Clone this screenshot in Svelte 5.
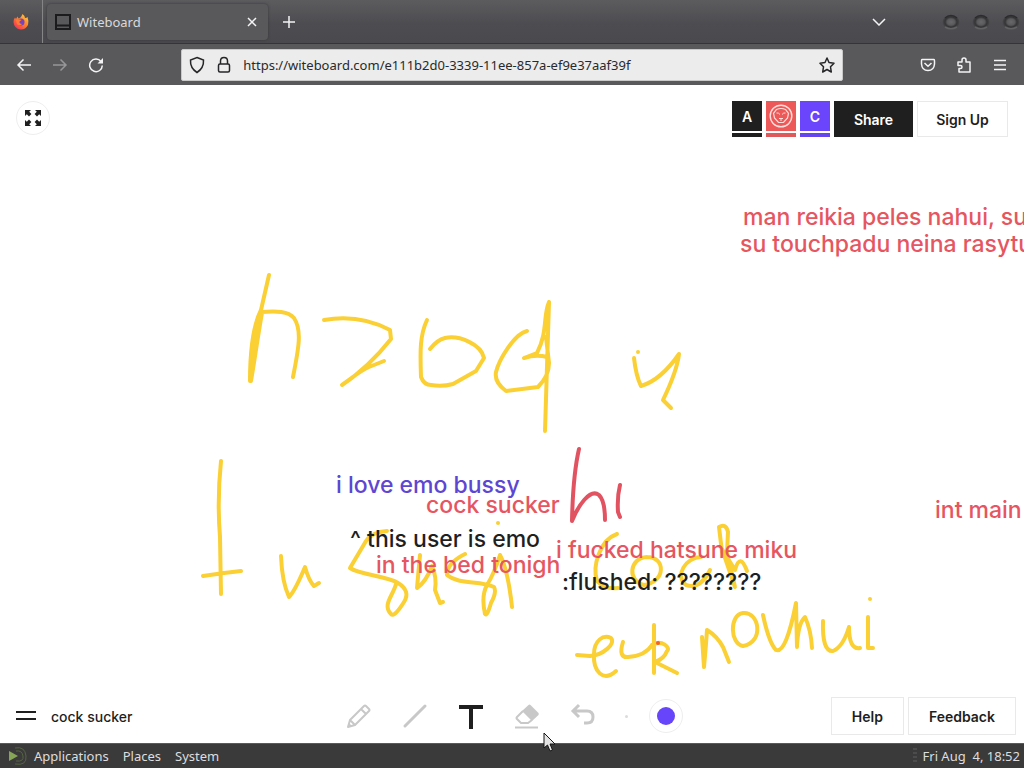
<script>
  let address = $state('https://witeboard.com/e111b2d0-3339-11ee-857a-ef9e37aaf39f');
  let boardName = $state('cock sucker');
  let tool = $state('text');

  const yellowStrokes = [
    'M269 275L261 310C253 326 250 352 250 381M262 313C258 335 255 358 251 381M260 314C254 332 253 355 250 376M261 312C277 311 288 311 294 318C302 330 299 347 293 377',
    'M324 320C347 316 369 319 390 330L391 339C376 358 360 373 342 385C351 379 361 370 369 367L384 361',
    'M427 320C420 335 420 350 421 377Q424 385 431 385Q442 387 453 384L476 371L484 358C481 344 459 335 445 338Q437 340 430 349',
    'M527 331C514 334 499 360 496 372Q494 382 506 391L538 387Q549 376 549 363L546 337M549 302C543 315 548 332 537 353L524 358Q536 354 547 357M549 302L545 431',
    'M638 352L638 352M634 358Q636 376 641 386Q661 380 679 354Q677 371 663 400L671 408',
    'M221 461Q217 500 220 537L221 594M203 576Q222 573 241 571',
    'M281 556Q282 582 289 597C295 591 300 579 305 567Q309 581 314 586L319 583',
    'M387 531Q372 532 366 541L350 568C360 575 387 576 398 583Q411 591 404 602Q394 618 391 614C382 605 393 596 396 584',
    'M420 555L417 588Q426 582 432 566Q437 577 435 590L440 603L443 602',
    'M465 554Q447 563 447 575C459 585 480 580 494 587Q497 592 491 603Q487 617 485 614Q481 596 487 585Q494 574 500 555Q508 570 512 607',
    'M498 523L498 523',
    'M617 534C600 540 592 566 597 581Q605 590 618 588',
    'M647 557C629 558 627 581 644 585C666 582 666 557 647 557',
    'M701 557C686 557 674 576 686 585Q700 590 710 570',
    'M722 552L719 527Q726 523 728 532L727 553L735 587L722 549L735 570Q740 552 747 571',
    'M577 655L590 656C603 655 616 644 611 638C603 634 594 641 594 654C593 671 603 683 616 671',
    'M623 642Q618 658 628 657Q645 656 652 645',
    'M654 625L654 673M652 645C662 639 671 648 667 651Q664 659 655 662L677 673',
    'M702 637L704 667Q706 645 707 630Q717 636 723 647L729 662',
    'M743 613C729 615 730 644 743 646C765 642 759 611 743 613',
    'M763 615Q769 643 776 650Q786 654 796 603L797 647Q798 623 805 617Q811 630 812 648',
    'M823 621Q822 652 833 651Q843 647 849 627Q849 650 860 648',
    'M868 617L868 648L873 648M870 599L870 599'
  ];

  const redStrokes = [
    'M579 449Q573 475 572 521C578 506 590 488 599 495Q605 501 605 520',
    'M620 485Q617 497 618 512L620 517'
  ];

  const notes = [
    { text: 'man reikia peles nahui, su', x: 743, y: 225, tone: 'red' },
    { text: 'su touchpadu neina rasytu', x: 740, y: 252, tone: 'red' },
    { text: 'i love emo bussy', x: 336, y: 493, tone: 'violet' },
    { text: 'cock sucker', x: 426, y: 513, tone: 'red' },
    { text: '^ this user is emo', x: 350, y: 547, tone: 'black' },
    { text: 'in the bed tonigh', x: 376, y: 573, tone: 'red' },
    { text: 'i fucked hatsune miku', x: 556, y: 558, tone: 'red' },
    { text: ':flushed: ????????', x: 562, y: 590, tone: 'black' },
    { text: 'int main', x: 935, y: 518, tone: 'red' }
  ];
</script>

<div class="desktop">
  <header class="tabs">
    <div class="pinned">
      <svg width="18" height="18" viewBox="0 0 18 18" aria-hidden="true">
        <defs>
          <linearGradient id="flame" x1="1" y1="0" x2="0.2" y2="1">
            <stop offset="0" stop-color="#ffe14a" />
            <stop offset="0.45" stop-color="#ff8a2a" />
            <stop offset="1" stop-color="#f0305c" />
          </linearGradient>
        </defs>
        <path d="M10.500 1Q13 3 13 5Q15 5 15.500 4Q17 8 16 12Q13 17 8.500 16.500Q2 15.500 1.500 9Q1.500 6 3 4.500L4 6L5.500 3.500L6.500 5.500Q9 5 10.500 1Z" fill="url(#flame)" />
        <circle cx="9" cy="9" r="3.500" fill="#7645bd" />
        <path d="M4 7Q7 5.500 9.500 7L7.500 8.500Q7 10.500 10 11Q8 13.500 5 11Z" fill="#ff7b35" />
      </svg>
    </div>
    <div class="tab">
      <svg width="16" height="16" viewBox="0 0 16 16" aria-hidden="true">
        <path d="M1 1H15V15H1ZM1 11.500H15" fill="none" stroke="#1b1b1d" stroke-width="2" />
      </svg>
      <span>Witeboard</span>
      <button aria-label="Close tab">
        <svg width="10" height="10" viewBox="0 0 10 10"><path d="M1 1L9 9M9 1L1 9" /></svg>
      </button>
    </div>
    <button class="new-tab" aria-label="New tab">
      <svg width="12" height="12" viewBox="0 0 12 12"><path d="M6 0V12M0 6H12" /></svg>
    </button>
    <button class="all-tabs" aria-label="List all tabs">
      <svg width="14" height="8" viewBox="0 0 14 8"><path d="M1 1L7 7L13 1" /></svg>
    </button>
    <div class="window-buttons">
      {#each ['Minimize', 'Maximize', 'Close'] as label}
        <button aria-label={label}>
          <svg width="18" height="16" viewBox="0 0 18 16">
            <defs>
              <radialGradient id={`ring-${label}`}>
                <stop offset="0" stop-color="#68686b" />
                <stop offset="0.45" stop-color="#5a5a5d" />
                <stop offset="0.7" stop-color="#343436" />
                <stop offset="1" stop-color="#48484b" />
              </radialGradient>
            </defs>
            <ellipse cx="9" cy="8" rx="8.500" ry="7" fill={`url(#ring-${label})`} stroke="none" />
            <path d="M3 4Q9 -1 15 4" stroke="#2c2c2e" />
            <path d="M3 13Q9 16.500 15 13" stroke="#626265" />
          </svg>
        </button>
      {/each}
    </div>
  </header>

  <nav class="toolbar" aria-label="Navigation">
    <div class="nav-group">
      <button aria-label="Back">
        <svg width="16" height="14" viewBox="0 0 16 14"><path d="M15 7H2M7.500 1.500L2 7L7.500 12.500" /></svg>
      </button>
      <button aria-label="Forward" class="faded">
        <svg width="16" height="14" viewBox="0 0 16 14"><path d="M1 7H14M8.500 1.500L14 7L8.500 12.500" /></svg>
      </button>
      <button aria-label="Reload">
        <svg width="16" height="16" viewBox="0 0 16 16"><path d="M13 4.500A6.300 6.300 0 1 0 14.300 8.500" /><path class="solid" d="M15 1V6.500H9.500Z" /></svg>
      </button>
    </div>
    <div class="spacer"></div>
    <label class="address">
      <svg width="16" height="18" viewBox="0 0 16 18"><path d="M8 1.500L14.500 4Q15 12 8 16.500Q1 12 1.500 4Z" /></svg>
      <svg width="14" height="18" viewBox="0 0 14 18"><rect x="1.500" y="8" width="11" height="8" rx="1.500" /><path d="M3.500 8V5Q3.500 1.500 7 1.500T10.500 5V8" /></svg>
      <input type="text" aria-label="Address" bind:value={address} />
      <svg width="16" height="16" viewBox="0 0 16 16"><path d="M8 1L10 5.500L15 6.200L11.500 9.800L12.300 15L8 12.500L3.700 15L4.500 9.800L1 6.200L6 5.500Z" stroke-linejoin="round" /></svg>
    </label>
    <div class="spacer"></div>
    <div class="nav-group">
      <button aria-label="Save to Pocket">
        <svg width="16" height="14" viewBox="0 0 16 14"><path d="M2 1.500H14Q14.500 1.500 14.500 3V6Q14 12.500 8 12.500T1.500 6V3Q1.500 1.500 2 1.500ZM4.500 5L8 8.300L11.500 5" /></svg>
      </button>
      <button aria-label="Extensions">
        <svg width="14" height="16" viewBox="0 0 14 16"><path d="M5 5V3Q5 1 7 1T9 3V5H13V15H2V11.500H3.500Q5 11.500 5 10T3.500 8.500H1V5Z" stroke-linejoin="round" /></svg>
      </button>
      <button aria-label="Menu">
        <svg width="12" height="12" viewBox="0 0 12 12"><path d="M0 1.500H12M0 6H12M0 10.500H12" /></svg>
      </button>
    </div>
  </nav>

  <main>
    <svg class="drawing" role="img" aria-label="Board drawing">
      <g transform="translate(0 -85)">
        {#each yellowStrokes as d}<path class="yellow" {d} />{/each}
        {#each redStrokes as d}<path class="red" {d} />{/each}
        <circle cx="658" cy="643" r="2" fill="#f2602c" />
        {#each notes as note}
          <text class={note.tone} x={note.x} y={note.y}>{note.text}</text>
        {/each}
      </g>
    </svg>

    <div class="top-bar">
      <button class="round" aria-label="Fit board to screen">
        <svg width="18" height="18" viewBox="0 0 18 18" fill="#1f1f1f">
          <path d="M1 1H7L5.200 2.800L7.400 5L5 7.400L2.800 5.200L1 7Z" />
          <path d="M17 1V7L15.200 5.200L13 7.400L10.600 5L12.800 2.800L11 1ZM1 17V11L2.800 12.800L5 10.600L7.400 13L5.200 15.200L7 17ZM17 17H11L12.800 15.200L10.600 13L13 10.600L15.200 12.800L17 11Z" />
        </svg>
      </button>
      <div class="people">
        <div class="person ink"><span>A</span></div>
        <div class="person coral">
          <span>
            <svg width="24" height="24" viewBox="0 0 24 24" fill="none" stroke="#ffdfdc">
              <circle cx="12" cy="12" r="10.800" stroke-width="1.400" />
              <path d="M7.500 5.500Q12 3.500 16.500 5.500L19.500 9.500L18.500 14L14.500 18.500H9.500L5.500 14L4.500 9.500Z" stroke-width="1.200" />
              <path d="M7.500 9Q9.500 8.500 11 10.500M16.500 9Q14.500 8.500 13 10.500M10 14.500H14M12 15V17" />
            </svg>
          </span>
        </div>
        <div class="person iris"><span>C</span></div>
        <button class="share">Share</button>
        <button class="outlined signup">Sign Up</button>
      </div>
    </div>

    <div class="bottom-bar">
      <div class="title">
        <button aria-label="Board menu">
          <svg width="20" height="10" viewBox="0 0 20 10"><path d="M0 1H20M0 8H20" stroke="#1f1f1f" stroke-width="2" /></svg>
        </button>
        <input type="text" aria-label="Board name" bind:value={boardName} />
      </div>
      <div class="tools">
        <button aria-label="Pencil" class:active={tool === 'pencil'} onclick={() => (tool = 'pencil')}>
          <svg width="26" height="26" viewBox="0 0 26 26"><path d="M4 17L18 3Q19 2 20 3L23 6Q24 7 23 8L9 22L2 24ZM15 6L20 11M4 17L9 22" fill="none" stroke="currentColor" stroke-width="2" stroke-linejoin="round" /><path d="M3 20L6 23L2 24Z" fill="currentColor" /></svg>
        </button>
        <button aria-label="Line" class:active={tool === 'line'} onclick={() => (tool = 'line')}>
          <svg width="26" height="26" viewBox="0 0 26 26"><path d="M3 23L23 3" stroke="currentColor" stroke-width="3" stroke-linecap="round" /></svg>
        </button>
        <button aria-label="Text" class:active={tool === 'text'} onclick={() => (tool = 'text')}>
          <svg width="26" height="26" viewBox="0 0 26 26"><path d="M1 2H25V6H15V26H11V6H1Z" fill="currentColor" /></svg>
        </button>
        <button aria-label="Eraser" class:active={tool === 'eraser'} onclick={() => (tool = 'eraser')}>
          <svg width="26" height="26" viewBox="0 0 26 26"><path d="M8 8L14.500 2Q15.500 1 16.500 2L24.500 10Q25 11 24.500 12L18 18Z" fill="currentColor" /><path d="M9 8L3 14Q2 15 3 16L7 20H14L18 17" fill="none" stroke="currentColor" stroke-width="2" /><path d="M1 24.500H24" stroke="currentColor" stroke-width="2" /></svg>
        </button>
        <button aria-label="Undo">
          <svg width="26" height="26" viewBox="0 0 26 26"><path d="M9 2L3 8L9 14M3 8H17Q23 8 23 14T17 20H14" fill="none" stroke="currentColor" stroke-width="3" /></svg>
        </button>
        <span class="size" aria-hidden="true"></span>
        <button class="round color" aria-label="Colour"><i></i></button>
      </div>
      <div class="help">
        <button class="outlined">Help</button>
        <button class="outlined">Feedback</button>
      </div>
    </div>
  </main>

  <footer class="panel">
    <svg width="20" height="20" viewBox="0 0 20 20" fill="none" aria-hidden="true">
      <path d="M7 2Q17 0 18 10T7 18M8 5Q14 4 15 10T8 15" stroke="#55663f" />
      <path d="M1 5L10 10L1 15Z" fill="#87a556" />
    </svg>
    <button>Applications</button>
    <button>Places</button>
    <button>System</button>
    <i class="grip"></i>
    <time>Fri Aug&nbsp; 4, 18:52</time>
  </footer>

  <svg class="pointer" width="14" height="21" viewBox="0 0 14 21" aria-hidden="true">
    <path d="M1 1V16L4.500 13L7 19L9.500 18L7 12H12Z" fill="#e4e4e4" stroke="#151515" />
  </svg>
</div>

<style>
  :global(body) {
    margin: 0;
    background: #fff;
  }
  button,
  input {
    margin: 0;
    padding: 0;
    border: 0;
    background: none;
    color: inherit;
    font: inherit;
    outline: none;
  }
  button {
    display: flex;
    align-items: center;
    justify-content: center;
    flex: none;
  }
  svg {
    display: block;
    flex: none;
  }
  .desktop {
    position: relative;
    display: flex;
    flex-direction: column;
    height: 100vh;
    overflow: hidden;
    font-family: Inter, sans-serif;
    color: #1f1f1f;
  }
  .tabs {
    display: flex;
    align-items: center;
    box-sizing: border-box;
    height: 44px;
    flex: none;
    overflow: hidden;
    border-bottom: 1px solid #353537;
    background: linear-gradient(#5c5c5f, #4d4d51 55%, #4a4a4e);
    color: #d9d9db;
    font: 13px 'Noto Sans', sans-serif;
  }
  .tabs button svg,
  .toolbar button svg {
    fill: none;
    stroke: #f4f4f6;
    stroke-width: 1.5;
  }
  .toolbar .solid {
    fill: #f4f4f6;
    stroke: none;
  }
  .pinned {
    display: flex;
    align-items: center;
    align-self: stretch;
    padding: 0 12px;
    border-right: 1px solid #858587;
  }
  .tab {
    display: flex;
    align-items: center;
    gap: 6px;
    box-sizing: border-box;
    width: 221px;
    height: 36px;
    margin-left: 4px;
    padding: 0 11px 0 8px;
    border-radius: 4px;
    background: #59595b;
    box-shadow: 0 0 3px #38383a;
  }
  .tab span {
    flex: 1;
  }
  .new-tab {
    width: 42px;
    height: 36px;
  }
  .all-tabs {
    width: 36px;
    height: 36px;
    margin-left: auto;
  }
  .window-buttons {
    display: flex;
    gap: 12px;
    margin: 0 4px 0 45px;
  }
  .toolbar {
    display: flex;
    align-items: center;
    box-sizing: border-box;
    height: 41px;
    flex: none;
    padding: 0 6px;
    background: #59595b;
  }
  .nav-group {
    display: flex;
  }
  .nav-group button {
    width: 36px;
    height: 32px;
  }
  .faded {
    opacity: 0.4;
  }
  .spacer {
    flex: 5;
  }
  .address {
    display: flex;
    align-items: center;
    flex: 48;
    box-sizing: border-box;
    height: 32px;
    padding: 0 7px;
    gap: 12px;
    border: 1px solid #c9c9ca;
    border-radius: 2px;
    background: #ececec;
    font: 13px 'Noto Sans', sans-serif;
  }
  .address svg {
    fill: none;
    stroke: #262628;
    stroke-width: 1.5;
  }
  .address input {
    flex: 1;
    min-width: 0;
    color: #29292b;
  }
  main {
    position: relative;
    display: flex;
    flex-direction: column;
    justify-content: space-between;
    flex: 1;
    min-height: 0;
    background: #fff;
  }
  .drawing {
    position: absolute;
    inset: 0;
    width: 100%;
    height: 100%;
    overflow: hidden;
  }
  .drawing path {
    fill: none;
    stroke-width: 4;
    stroke-linecap: round;
    stroke-linejoin: round;
  }
  path.yellow {
    stroke: #fad035;
  }
  path.red {
    stroke: #e15361;
  }
  text {
    font-size: 23px;
    font-weight: 500;
  }
  text.red {
    fill: #e65560;
  }
  text.violet {
    fill: #5d47d2;
  }
  text.black {
    fill: #1f1f1f;
  }
  .top-bar {
    position: relative;
    display: flex;
    justify-content: space-between;
    padding: 16px;
    font-size: 14px;
    font-weight: 600;
  }
  .round {
    box-sizing: border-box;
    width: 34px;
    height: 34px;
    border: 1px solid #eee;
    border-radius: 50%;
    background: #fff;
  }
  .people {
    display: flex;
    gap: 4px;
  }
  .person {
    width: 30px;
    height: 30px;
    padding-bottom: 2px;
    border-bottom: 4px solid;
  }
  .person span {
    display: flex;
    align-items: center;
    justify-content: center;
    height: 30px;
    color: #fff;
  }
  .ink {
    border-color: #1f1f1f;
  }
  .ink span {
    background: #1f1f1f;
  }
  .coral {
    border-color: #df595b;
  }
  .coral span {
    background: #ed5959;
  }
  .iris {
    border-color: #6444ef;
  }
  .iris span {
    background: #6a45fb;
  }
  .share {
    width: 79px;
    height: 36px;
    background: #1f1f1f;
    color: #fff;
  }
  .outlined {
    box-sizing: border-box;
    height: 38px;
    padding: 0 20px;
    border: 1px solid #e9e9e9;
    background: #fff;
  }
  .signup {
    height: 36px;
    width: 91px;
    padding: 0;
  }
  .bottom-bar {
    position: relative;
    display: grid;
    grid-template-columns: 1fr auto 1fr;
    align-items: center;
    padding: 4px 8px 8px;
    background: #fff;
    font-size: 14px;
    font-weight: 600;
  }
  .title {
    display: flex;
    align-items: center;
    gap: 15px;
    padding-left: 8px;
    font-weight: 500;
  }
  .title input {
    width: 160px;
  }
  .tools {
    display: flex;
    align-items: center;
    color: #c8c8c8;
  }
  .tools button:not(.round) {
    width: 56px;
    height: 38px;
  }
  .tools button.active {
    color: #1f1f1f;
  }
  .size {
    width: 3px;
    height: 3px;
    margin: 0 14px;
    border-radius: 50%;
    background: #dcdcdc;
  }
  .color {
    margin: 0 10px 0 7px;
  }
  .color i {
    width: 18px;
    height: 18px;
    flex: none;
    border-radius: 50%;
    background: #6645fa;
  }
  .help {
    display: flex;
    justify-content: flex-end;
    gap: 4px;
  }
  .panel {
    display: flex;
    align-items: center;
    box-sizing: border-box;
    height: 25px;
    flex: none;
    gap: 14px;
    padding: 0 4px 0 8px;
    border-top: 1px solid #5a5a5a;
    background: #3a3a3b;
    color: #dedede;
    font: 13px 'Noto Sans', sans-serif;
  }
  .panel svg {
    margin-right: -8px;
  }
  .grip {
    width: 4px;
    height: 16px;
    margin: 0 -8px 0 auto;
    background: repeating-linear-gradient(#4c4c4c 0 2px, #3a3a3b 2px 4px);
  }
  .pointer {
    position: absolute;
    left: 543px;
    top: 732px;
  }
</style>
